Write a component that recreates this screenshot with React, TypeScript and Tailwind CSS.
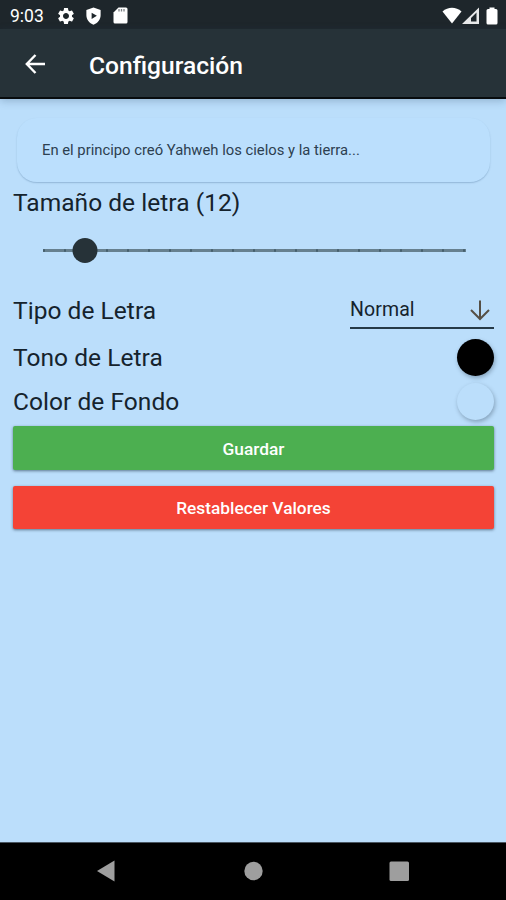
import type { ReactNode } from "react";
import { MdSettings } from "react-icons/md";

const STEPS = 20;
const MIN_SIZE = 10;
const fontSize = 12;

function StatusBar() {
  return (
    <div className="h-[29px] bg-[#1e262b] flex items-center justify-between text-white pt-[2px]">
      <div className="flex items-center pl-[10px]">
        <span className="w-[46px] mt-[2px] text-[17.5px] leading-none">9:03</span>
        <MdSettings className="w-[20px] h-[20px]" />
        <svg className="w-[19px] h-[18px] ml-[8px]" viewBox="0 0 24 24" fill="currentColor">
          <path fillRule="evenodd" d="M12 0.500L2.500 4v7c0 5.550 4 10.740 9.500 12.500 5.500-1.760 9.500-6.950 9.500-12.500V4L12 0.500zM9.500 7.500v8.500l7-4.250z" />
        </svg>
        <svg className="w-[15px] h-[17px] ml-[10px]" viewBox="0 0 15 17">
          <path fill="#fff" d="M5.500 0.500H13a1.500 1.500 0 0 1 1.500 1.500v13a1.500 1.500 0 0 1-1.500 1.500H2A1.500 1.500 0 0 1 0.500 15V5.500z" />
          <path stroke="#7d8286" strokeWidth="1.300" d="M6 2v2.500M8.500 2v2.500M11 2v2.500" />
        </svg>
      </div>
      <div className="flex items-center pr-[7px]">
        <svg className="w-[20px] h-[17px]" viewBox="0 0 20 17" fill="currentColor">
          <path d="M0.500 4.500C6 -0.500 14 -0.500 19.500 4.500L10 16.500z" />
        </svg>
        <svg className="w-[17px] h-[17px]" viewBox="0 0 17 17">
          <path fillRule="evenodd" fill="#e8e9ea" d="M0 17L17 0.500V17zM9 14.500h5.500V5.500L9 11z" />
        </svg>
        <svg className="w-[12px] h-[18px] ml-[7px] mr-[1px]" viewBox="0 0 12 18" fill="currentColor">
          <path d="M3.500 0.500h5v1.500h1.500a1.500 1.500 0 0 1 1.500 1.500V16a1.500 1.500 0 0 1-1.500 1.500H2A1.500 1.500 0 0 1 0.500 16V3.500A1.500 1.500 0 0 1 2 2h1.500z" />
        </svg>
      </div>
    </div>
  );
}

function Header() {
  return (
    <header className="h-[70px] bg-[#263238] border-b-2 border-[#080c0e] flex items-center shadow-[0_2px_8px_rgba(40,70,100,0.28)]">
      <svg className="w-[21px] h-[20px] ml-[25px] mt-[2px]" viewBox="0 0 21 20" fill="none" stroke="#fff" strokeWidth="2.400">
        <path d="M20 10H2M10.500 1L1.800 10l8.700 9" />
      </svg>
      <h1 className="ml-[43px] mt-[6px] text-white text-[24.600px] font-medium leading-none">Configuración</h1>
    </header>
  );
}

function SizeSlider({ value }: { value: number }) {
  return (
    <div className="relative h-[26px] mt-[22px] ml-[30px] mr-[28.500px] flex items-center">
      <div className="w-full h-[3px] bg-[#66808f] flex items-center justify-between">
        {Array.from({ length: STEPS + 1 }, (_, i) => (
          <span key={i} className="w-[2px] h-[3px] rounded-full bg-[#465f6c]" />
        ))}
      </div>
      <div
        className="absolute w-[25px] h-[25px] rounded-full bg-[#263238] -translate-x-1/2"
        style={{ left: `${((value - MIN_SIZE) / STEPS) * 100}%` }}
      />
    </div>
  );
}

function Row({ label, className, children }: { label: string; className: string; children: ReactNode }) {
  return (
    <div className={`flex items-center justify-between ${className}`}>
      <span className="mt-[2px] text-[24.500px] leading-none tracking-[0.04px]">{label}</span>
      {children}
    </div>
  );
}

function NavBar() {
  return (
    <nav className="h-[58px] bg-black border-t border-[#4a5661] text-[#9e9e9e]">
      <svg className="w-full h-[57px]" viewBox="0 0 506 57" fill="currentColor">
        <path d="M97 28L114.500 17.500v21z" />
        <circle cx="253.500" cy="28" r="9.200" />
        <rect x="389.500" y="18.500" width="19.500" height="19.500" rx="1.500" />
      </svg>
    </nav>
  );
}

export default function App() {
  return (
    <div className="w-[506px] h-[900px] overflow-hidden flex flex-col bg-[#bbdefb] text-[#15232d] font-['Roboto',sans-serif]">
      <StatusBar />
      <Header />

      <main className="flex-1 pl-[13px] pr-[12px] pt-[19px]">
        {/* Text preview */}
        <div className="h-[64px] ml-[4px] mr-[4px] rounded-[20px] bg-[#bbdffd] pl-[25px] pt-[24px] shadow-[0_1px_1.5px_rgba(60,100,140,0.32)]">
          <p className="text-[14.800px] leading-[17px] text-[#2d4050]">En el principo creó Yahweh los cielos y la tierra...</p>
        </div>

        <h2 className="mt-[9px] text-[24.500px] leading-[24px] tracking-[0.04px]">Tamaño de letra (12)</h2>
        <SizeSlider value={fontSize} />

        <Row label="Tipo de Letra" className="h-[36px] mt-[29px]">
          <div className="w-[144px] h-[36px] mt-[2px] border-b-2 border-[#263a47] flex items-center justify-between pr-[4px]">
            <span className="text-[19.500px] leading-none tracking-[0.1px]">Normal</span>
            <svg className="w-[20px] h-[21px]" viewBox="0 0 20 21" fill="none" stroke="#554f45" strokeWidth="2">
              <path d="M10 0.500V19M1 10l9 9 9-9" />
            </svg>
          </div>
        </Row>
        <Row label="Tono de Letra" className="h-[37px] mt-[11px]">
          <span className="w-[37px] h-[37px] rounded-full bg-black shadow-[1px_2px_4px_rgba(50,70,90,0.4)]" />
        </Row>
        <Row label="Color de Fondo" className="h-[37px] mt-[7px]">
          <span className="w-[37px] h-[37px] rounded-full bg-[#bbdefb] shadow-[1px_2px_4px_rgba(50,70,90,0.4)]" />
        </Row>

        <button className="block w-full h-[44px] mt-[6px] pt-[3px] rounded-[2px] bg-[#4caf50] text-white text-[17.300px] font-medium shadow-[0_1px_3px_rgba(30,50,70,0.6)]">
          Guardar
        </button>
        <button className="block w-full h-[43px] mt-[16px] pt-[2px] rounded-[2px] bg-[#f44336] text-white text-[17.300px] font-medium shadow-[0_1px_3px_rgba(30,50,70,0.6)]">
          Restablecer Valores
        </button>
      </main>

      <NavBar />
    </div>
  );
}
